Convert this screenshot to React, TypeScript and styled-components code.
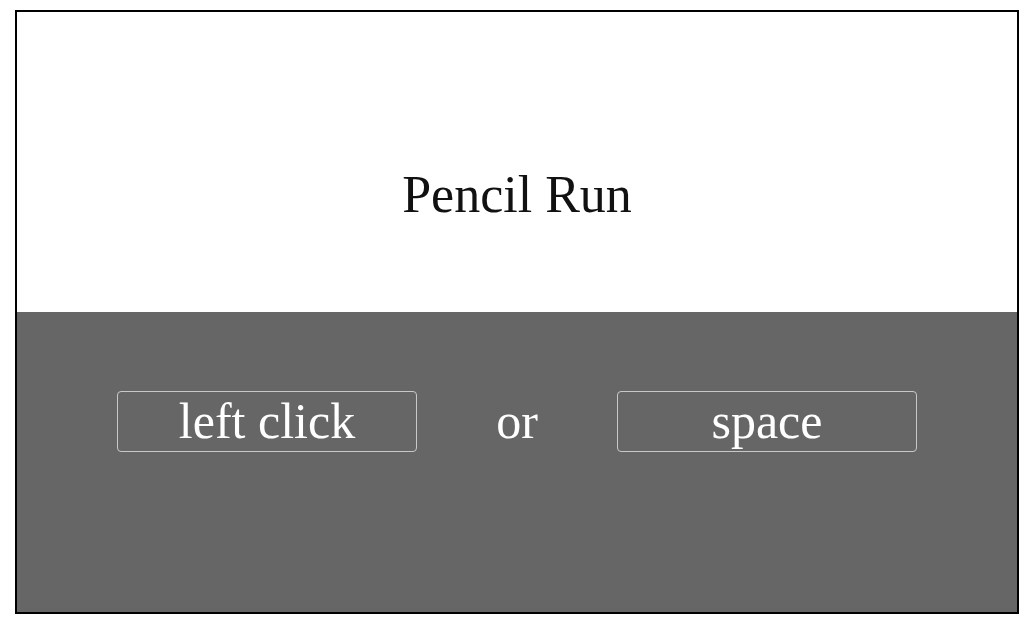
import React from "react";
import styled, { createGlobalStyle } from "styled-components";

const Global = createGlobalStyle`
  html, body { margin: 0; padding: 0; background: #ffffff; }
  body { font-family: "Liberation Serif", "DejaVu Serif", serif; }
`;

const Stage = styled.div`
  margin: 10px 0 0 15px;
  width: 1000px;
  height: 600px;
  border: 2px solid #000;
  display: flex;
  flex-direction: column;
`;

const TitlePanel = styled.div`
  height: 300px;
  background: #ffffff;
  display: flex;
  justify-content: center;
  align-items: flex-start;
  padding-top: 157px;
  box-sizing: border-box;
`;

const Title = styled.h1`
  margin: 0;
  font-weight: normal;
  font-size: 52px;
  line-height: 1;
  color: #111;
`;

const ControlPanel = styled.div`
  height: 300px;
  background: #666666;
  box-sizing: border-box;
  padding: 79px 100px 0;
  display: flex;
  align-items: flex-start;
  justify-content: space-between;
`;

const KeyBox = styled.div`
  width: 300px;
  height: 61px;
  box-sizing: border-box;
  border: 1px solid #c8c8c8;
  border-radius: 4px;
  display: flex;
  justify-content: center;
  color: #ffffff;
  font-size: 50px;
  line-height: 59px;
`;

const Or = styled.span`
  color: #ffffff;
  font-size: 50px;
  line-height: 61px;
`;

export default function App() {
  return (
    <>
      <Global />
      <Stage>
        <TitlePanel>
          <Title>Pencil Run</Title>
        </TitlePanel>
        <ControlPanel>
          <KeyBox>left click</KeyBox>
          <Or>or</Or>
          <KeyBox>space</KeyBox>
        </ControlPanel>
      </Stage>
    </>
  );
}
